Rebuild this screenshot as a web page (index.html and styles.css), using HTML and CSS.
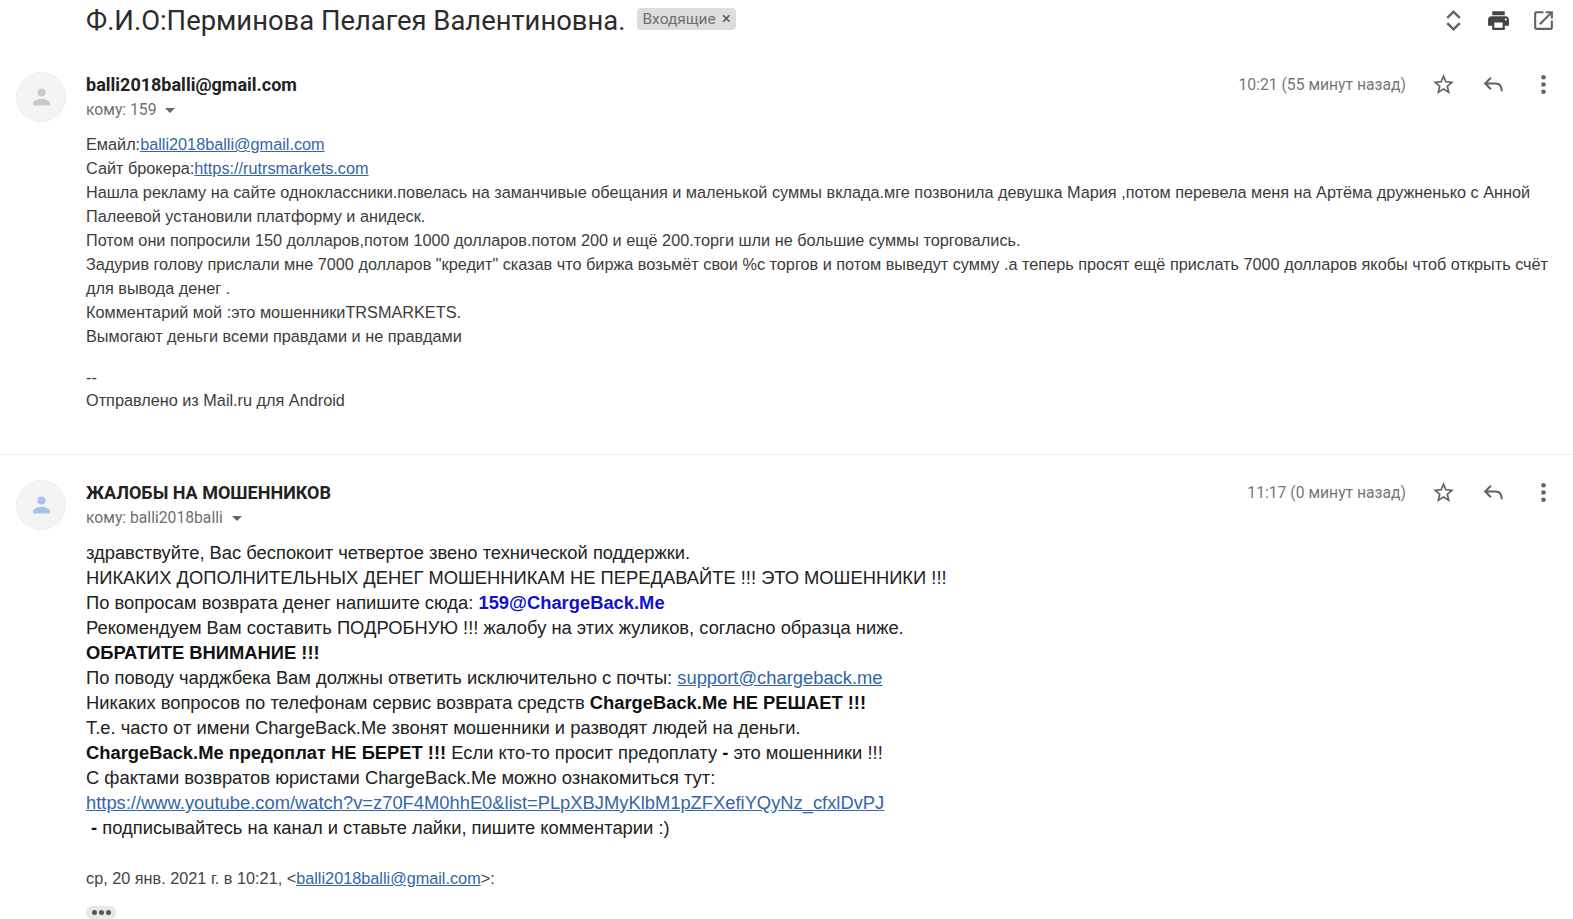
FILE: index.html
```html
<!DOCTYPE html>
<html lang="ru">

<head>
  <meta charset="UTF-8">
  <title>Входящие</title>
  <link rel="stylesheet" href="styles.css">
</head>

<body>
  <div class="allpage">
    <div class="subjectRow">
      <h2 class="subject">Ф.И.О:Перминова Пелагея Валентиновна.</h2>
      <span class="label">Входящие <span class="labelX">×</span></span>
      <div class="topIcons">
        <svg class="icon" viewBox="0 0 24 24"><path d="M6 9.5l6-6 6 6M6 14.5l6 6 6-6" fill="none" stroke="#5f6368" stroke-width="2.4"/></svg>
        <svg class="icon" viewBox="0 0 24 24"><path d="M19 8H5c-1.66 0-3 1.34-3 3v6h4v4h12v-4h4v-6c0-1.66-1.34-3-3-3zm-3 11H8v-5h8v5zm3-7c-.55 0-1-.45-1-1s.45-1 1-1 1 .45 1 1-.45 1-1 1zm-1-9H6v4h12V3z" fill="#444"/></svg>
        <svg class="icon" viewBox="0 0 24 24"><path d="M19 19H5V5h7V3H5a2 2 0 0 0-2 2v14a2 2 0 0 0 2 2h14a2 2 0 0 0 2-2v-7h-2v7zM14 3v2h3.59l-9.83 9.83 1.41 1.41L19 6.41V10h2V3h-7z" fill="#5f6368"/></svg>
      </div>
    </div>

    <div class="message first">
      <div class="avatar">
        <svg viewBox="0 0 24 24"><circle cx="12" cy="7.5" r="3.6" fill="#c9c9c9"/><path d="M4.5 19v-2c0-2.6 5-4 7.5-4s7.5 1.4 7.5 4v2z" fill="#c9c9c9"/></svg>
      </div>
      <div class="content">
        <div class="head">
          <div>
            <div class="sender">balli2018balli@gmail.com</div>
            <div class="to">кому: 159 <span class="caret"></span></div>
          </div>
          <div class="actions">
            <span class="time">10:21 (55 минут назад)</span>
            <svg class="icon" viewBox="0 0 24 24"><path d="M22 9.24l-7.19-.62L12 2 9.19 8.63 2 9.24l5.46 4.73L5.82 21 12 17.27 18.18 21l-1.63-7.03L22 9.24zM12 15.4l-3.76 2.27 1-4.28-3.32-2.88 4.38-.38L12 6.1l1.71 4.04 4.38.38-3.32 2.88 1 4.28L12 15.4z" fill="#5f6368"/></svg>
            <svg class="icon" viewBox="0 0 24 24"><path d="M9.5 5.5 4 11l5.5 5.5M4 11h10c3 0 6 2 6 7.5" fill="none" stroke="#5f6368" stroke-width="2"/></svg>
            <svg class="icon" viewBox="0 0 24 24"><circle cx="12" cy="5" r="2.2" fill="#5f6368"/><circle cx="12" cy="12" r="2.2" fill="#5f6368"/><circle cx="12" cy="19" r="2.2" fill="#5f6368"/></svg>
          </div>
        </div>
        <div class="bodySmall">
          Емайл:<a href="#">balli2018balli@gmail.com</a><br>
          Сайт брокера:<a href="#">https://rutrsmarkets.com</a><br>
          Нашла рекламу на сайте одноклассники.повелась на заманчивые обещания и маленькой суммы вклада.мге позвонила девушка Мария ,потом перевела меня на Артёма дружненько с Анной Палеевой установили платформу и анидеск.<br>
          Потом они попросили 150 долларов,потом 1000 долларов.потом 200 и ещё 200.торги шли не большие суммы торговались.<br>
          Задурив голову прислали мне 7000 долларов "кредит" сказав что биржа возьмёт свои %с торгов и потом выведут сумму .а теперь просят ещё прислать 7000 долларов якобы чтоб открыть счёт для вывода денег .<br>
          Комментарий мой :это мошенникиTRSMARKETS.<br>
          Вымогают деньги всеми правдами и не правдами
          <div class="signature">--<br>Отправлено из Mail.ru для Android</div>
        </div>
      </div>
    </div>

    <div class="message second">
      <div class="avatar">
        <svg viewBox="0 0 24 24"><circle cx="12" cy="7.5" r="3.6" fill="#a8c2ec"/><path d="M4.5 19v-2c0-2.6 5-4 7.5-4s7.5 1.4 7.5 4v2z" fill="#a8c2ec"/></svg>
      </div>
      <div class="content">
        <div class="head">
          <div>
            <div class="sender">ЖАЛОБЫ НА МОШЕННИКОВ</div>
            <div class="to">кому: balli2018balli <span class="caret"></span></div>
          </div>
          <div class="actions">
            <span class="time">11:17 (0 минут назад)</span>
            <svg class="icon" viewBox="0 0 24 24"><path d="M22 9.24l-7.19-.62L12 2 9.19 8.63 2 9.24l5.46 4.73L5.82 21 12 17.27 18.18 21l-1.63-7.03L22 9.24zM12 15.4l-3.76 2.27 1-4.28-3.32-2.88 4.38-.38L12 6.1l1.71 4.04 4.38.38-3.32 2.88 1 4.28L12 15.4z" fill="#5f6368"/></svg>
            <svg class="icon" viewBox="0 0 24 24"><path d="M9.5 5.5 4 11l5.5 5.5M4 11h10c3 0 6 2 6 7.5" fill="none" stroke="#5f6368" stroke-width="2"/></svg>
            <svg class="icon" viewBox="0 0 24 24"><circle cx="12" cy="5" r="2.2" fill="#5f6368"/><circle cx="12" cy="12" r="2.2" fill="#5f6368"/><circle cx="12" cy="19" r="2.2" fill="#5f6368"/></svg>
          </div>
        </div>
        <div class="bodyBig">
          здравствуйте, Вас беспокоит четвертое звено технической поддержки.<br>
          НИКАКИХ ДОПОЛНИТЕЛЬНЫХ ДЕНЕГ МОШЕННИКАМ НЕ ПЕРЕДАВАЙТЕ !!! ЭТО МОШЕННИКИ !!!<br>
          По вопросам возврата денег напишите сюда: <b class="blue">159@ChargeBack.Me</b><br>
          Рекомендуем Вам составить ПОДРОБНУЮ !!! жалобу на этих жуликов, согласно образца ниже.<br>
          <b>ОБРАТИТЕ ВНИМАНИЕ !!!</b><br>
          По поводу чарджбека Вам должны ответить исключительно с почты: <a href="#">support@chargeback.me</a><br>
          Никаких вопросов по телефонам сервис возврата средств <b>ChargeBack.Me НЕ РЕШАЕТ !!!</b><br>
          Т.е. часто от имени ChargeBack.Me звонят мошенники и разводят людей на деньги.<br>
          <b>ChargeBack.Me предоплат НЕ БЕРЕТ !!!</b> Если кто-то просит предоплату <b>-</b> это мошенники !!!<br>
          С фактами возвратов юристами ChargeBack.Me можно ознакомиться тут:<br>
          <a href="#">https://www.youtube.com/watch?v=z70F4M0hhE0&amp;list=PLpXBJMyKlbM1pZFXefiYQyNz_cfxlDvPJ</a><br>
          &nbsp;<b>-</b> подписывайтесь на канал и ставьте лайки, пишите комментарии :)
        </div>
        <div class="quoteLine">ср, 20 янв. 2021 г. в 10:21, &lt;<a href="#">balli2018balli@gmail.com</a>&gt;:</div>
        <div class="moreDots"><i></i><i></i><i></i></div>
      </div>
    </div>
  </div>
</body>

</html>
```

FILE: styles.css
```css
* {
  margin: 0;
  padding: 0;
  box-sizing: border-box;
}

body {
  background: #fff;
  overflow: hidden;
  font-family: "Liberation Sans", Arial, sans-serif;
  color: #222;
}

.allpage {
  width: 100%;
  height: 919px;
  overflow: hidden;
}

.subjectRow {
  display: flex;
  align-items: center;
  height: 40px;
  padding-left: 86px;
  padding-right: 17px;
}

.subject {
  font-family: Roboto, sans-serif;
  font-weight: 400;
  font-size: 27.4px;
  color: #2b2b2b;
  margin-top: 2px;
}

.label {
  margin-left: 12px;
  margin-bottom: 2px;
  background: #ddd;
  color: #707070;
  font-family: Roboto, sans-serif;
  font-size: 15.5px;
  line-height: 21px;
  padding: 0 5px;
  border-radius: 4px;
}

.labelX {
  color: #555;
  font-size: 17px;
  margin-left: 2px;
}

.topIcons {
  margin-left: auto;
  display: flex;
  gap: 20px;
}

.icon {
  width: 25px;
  height: 25px;
  flex: none;
}

.message {
  display: flex;
  padding-left: 16px;
  padding-right: 17px;
}

.first {
  padding-top: 32px;
  height: 415px;
  border-bottom: 1px solid #eee;
}

.second {
  padding-top: 25px;
}

.avatar {
  width: 50px;
  height: 50px;
  border-radius: 50%;
  background: #f4f4f4;
  border: 1px solid #eee;
  display: flex;
  align-items: center;
  justify-content: center;
  flex: none;
}

.avatar svg {
  width: 27px;
  height: 27px;
}

.content {
  margin-left: 20px;
  flex: 1;
  min-width: 0;
}

.head {
  display: flex;
  justify-content: space-between;
  padding-top: 1px;
}

.sender {
  font-family: Roboto, sans-serif;
  font-weight: 700;
  font-size: 18px;
  line-height: 24px;
  color: #222;
}

.to {
  font-family: Roboto, sans-serif;
  font-size: 15.7px;
  line-height: 24px;
  margin-top: 1px;
  color: #707070;
}

.caret {
  display: inline-block;
  margin-left: 5px;
  border-left: 5px solid transparent;
  border-right: 5px solid transparent;
  border-top: 5px solid #666;
  vertical-align: middle;
}

.actions {
  display: flex;
  align-items: center;
  gap: 25px;
  height: 22px;
  color: #777;
}

.time {
  font-family: Roboto, sans-serif;
  font-size: 15.7px;
}

.bodySmall {
  margin-top: 10px;
  font-size: 16.25px;
  line-height: 24px;
  color: #3c3c3c;
}

.signature {
  margin-top: 18px;
  line-height: 23px;
}

.bodyBig {
  margin-top: 10px;
  font-size: 18.35px;
  line-height: 25px;
  color: #222;
}

.bodyBig b {
  color: #111;
}

.bodyBig b.blue {
  color: #1111cc;
}

a {
  color: #3465a8;
}

.quoteLine {
  margin-top: 26px;
  font-size: 16.25px;
  line-height: 25px;
  color: #444;
}

.moreDots {
  margin-top: 15px;
  width: 30px;
  height: 13px;
  background: #e8e8e8;
  border-radius: 6px;
  display: flex;
  align-items: center;
  justify-content: center;
  gap: 2px;
}

.moreDots i {
  width: 5px;
  height: 5px;
  border-radius: 50%;
  background: #555;
}
```
